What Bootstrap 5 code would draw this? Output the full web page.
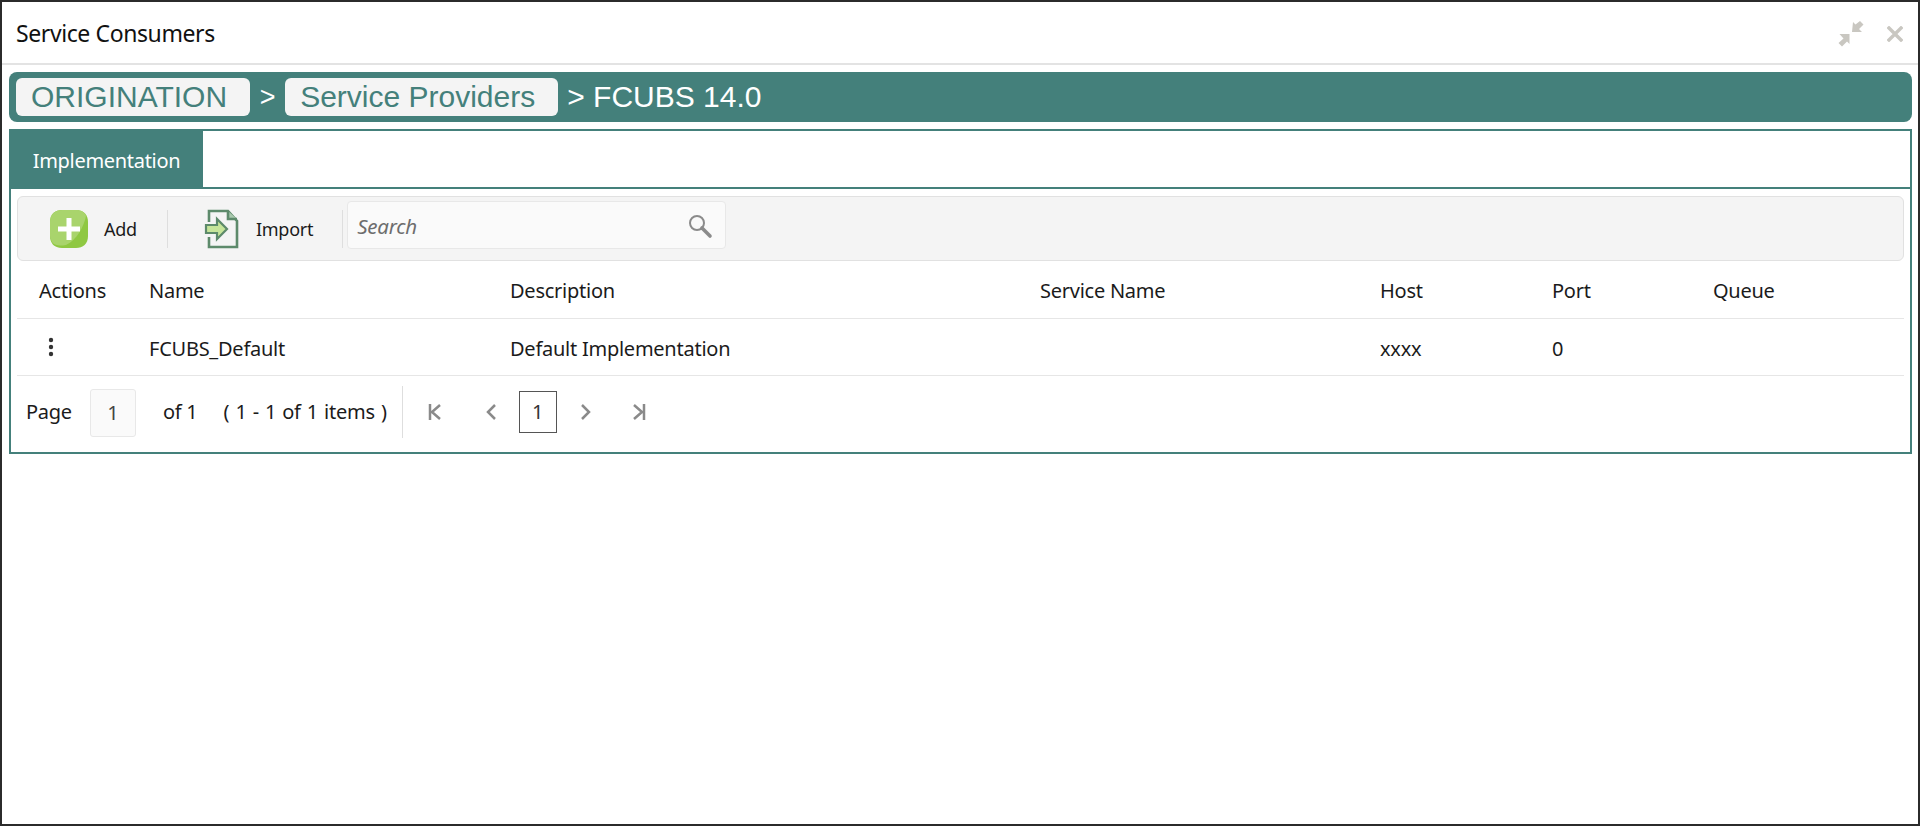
<!DOCTYPE html>
<html lang="en">
<head>
<meta charset="utf-8">
<title>Service Consumers</title>
<link href="https://cdn.jsdelivr.net/npm/bootstrap@5.3.0/dist/css/bootstrap.min.css" rel="stylesheet">
<style>
html,body{height:100%;margin:0;background:#fff}
body{font-family:"Noto Sans","Open Sans",sans-serif;color:#1b1b1b;overflow:hidden}
.win{height:826px;border:2px solid #2b2b2b;background:#fff}
.win-head{height:63px;flex:0 0 auto;border-bottom:2px solid #e3e3e3;padding:2px 14px 0}
.win-title{font-size:23px;letter-spacing:-.4px;color:#111}
.crumbs{margin:7px 6px 0 7px;height:50px;flex:0 0 auto;background:#44807b;border-radius:8px;padding:0 7px;color:#fff;font-family:"Liberation Sans",sans-serif;font-size:30px;line-height:38px}
.crumb-pill{display:block;height:38px;background:#f4f4f4;color:#44807b;border-radius:6px;padding:0 23px 0 15px;text-decoration:none}
.crumb-sep{width:35px;text-align:center;font-size:27px}
.crumb-last{margin-left:9px}
.panel-box{margin:7px 6px 0 7px;height:325px;border:2px solid #44807b}
.tab-strip{height:58px;border-bottom:2px solid #44807b}
.tab-on{width:194px;margin-left:-2px;height:58px;padding:2px 0 0 1px;background:#44807b;color:#fff;font-size:20px;letter-spacing:-.3px}
.tools{margin:7px 6px 0 6px;height:65px;background:#f4f4f4;border:1px solid #e1e1e1;border-radius:6px;padding:0 0 0 32px}
.tool-lbl{font-size:18px;letter-spacing:-.25px;color:#1b1b1b;padding-top:2px}
.tool-sep{width:1px;height:38px;background:#dedede}
.tool-search{width:379px;height:48px;margin:-8px 0 0 4px;background:#fafafa;border:1px solid #e8e8e8;border-radius:4px;padding:3px 12px 0 9px}
.tool-search span{font-size:20.500px;font-style:italic;color:#6d6d6d;letter-spacing:-.25px}
.grid-tbl{table-layout:fixed;width:calc(100% - 12px);margin:0 6px;border-collapse:collapse}
.grid-tbl th,.grid-tbl td{font-weight:400;font-size:20px;letter-spacing:-.25px;color:#1b1b1b;border-bottom:1px solid #e6e6e6;padding:0;vertical-align:middle}
.grid-tbl th{height:57px;padding-top:3px}
.grid-tbl td{height:57px;padding-top:5px}
.grid-tbl .c1{width:132px;padding-left:22px}
.c2{width:361px}.c3{width:530px}.c4{width:340px}.c5{width:172px}.c6{width:161px}
.pager{height:77px;padding:0 0 5px 15px;font-size:20px;letter-spacing:-.25px;color:#1b1b1b}
.page-box{width:46px;height:48px;margin:2px 27px 0 18px;background:#fafafa;border:1px solid #e8e8e8;border-radius:3px;color:#444}
.pager-sep{width:1px;height:52px;background:#dedede;margin:0 0 0 15px}
.page-cur{width:38px;height:42px;border:1px solid #555;color:#333;margin:0 24px 0 23px;font-size:20px}
.pg-icon{display:block}
.rng{margin-left:26px;word-spacing:1.150px}
</style>
</head>
<body>
<div class="win d-flex flex-column">
  <div class="win-head d-flex align-items-center justify-content-between">
    <div class="win-title">Service Consumers</div>
    <div class="d-flex align-items-center" style="gap:23px;margin-right:1px">
      <svg width="26" height="26" viewBox="0 0 26 26" aria-label="Minimize"><g fill="#c9c7c1"><path d="M15 1l2.500 2.500L22 0l3.500 3.500L21 8l3 3H14z"/><path d="M1.500 13h10v10L9 20.500 4 25.500 0.500 22l5-4.500z"/></g></svg>
      <svg width="16" height="16" viewBox="0 0 16 16" aria-label="Close"><path d="M2 2l12 12M14 2L2 14" stroke="#c9c7c1" stroke-width="3.400" stroke-linecap="square"/></svg>
    </div>
  </div>
  <div class="crumbs d-flex align-items-center">
    <a class="crumb-pill" href="#">ORIGINATION</a>
    <span class="crumb-sep">&gt;</span>
    <a class="crumb-pill" href="#">Service Providers</a>
    <span class="crumb-last">&gt; FCUBS 14.0</span>
  </div>
  <div class="panel-box">
    <div class="tab-strip d-flex">
      <div class="tab-on d-flex align-items-center justify-content-center">Implementation</div>
    </div>
    <div class="tools d-flex align-items-center">
      <svg width="38" height="38" viewBox="0 0 38 38" aria-label="Add"><path d="M12 0h14c8 0 12 5 12 12v14c0 8-5 12-12 12H12C4 38 0 33 0 26V12C0 4 5 0 12 0z" fill="#8fc842"/><path d="M12 0h14c5 0 9 2 10 6-2 10-9 24-20 29-6 1-11 1-14-3-1-2-2-4-2-6V12C0 4 5 0 12 0z" fill="#a9d46c"/><path d="M16.500 8h5v8.500H30v5h-8.500V30h-5v-8.500H8v-5h8.500z" fill="#fff"/></svg>
      <span class="tool-lbl ms-3">Add</span>
      <span class="tool-sep" style="margin-left:30px"></span>
      <svg style="margin-left:36px" width="36" height="40" viewBox="0 0 36 40" aria-label="Import"><g fill="none" stroke="#5d8a6b" stroke-width="2.600"><path d="M5 13V2h19l9 10v26H5V28"/><path d="M24 2v8h9" fill="#a9c9ae"/></g><path d="M2 16h11v-6l10 10-10 10v-6H2z" fill="#c6e59a" stroke="#5d8a6b" stroke-width="2.200"/></svg>
      <span class="tool-lbl" style="margin-left:16px">Import</span>
      <span class="tool-sep" style="margin-left:29px"></span>
      <div class="tool-search d-flex align-items-center justify-content-between">
        <span>Search</span>
        <svg width="26" height="26" viewBox="0 0 26 26" aria-label="Search"><circle cx="10" cy="10" r="7" fill="none" stroke="#8b8b8b" stroke-width="2"/><path d="M15 15l8 8" stroke="#8b8b8b" stroke-width="3.600" stroke-linecap="round"/></svg>
      </div>
    </div>
    <table class="grid-tbl">
      <thead><tr><th class="c1">Actions</th><th class="c2">Name</th><th class="c3">Description</th><th class="c4">Service Name</th><th class="c5">Host</th><th class="c6">Port</th><th>Queue</th></tr></thead>
      <tbody><tr><td class="c1"><svg style="margin:-4px 0 0 9px;display:block" width="6" height="20" viewBox="0 0 6 20" aria-label="Actions"><g fill="#333"><circle cx="3" cy="3" r="2.200"/><circle cx="3" cy="10" r="2.200"/><circle cx="3" cy="17" r="2.200"/></g></svg></td><td>FCUBS_Default</td><td>Default Implementation</td><td></td><td>xxxx</td><td>0</td><td></td></tr></tbody>
    </table>
    <div class="pager d-flex align-items-center">
      <span>Page</span>
      <div class="page-box d-flex align-items-center justify-content-center">1</div>
      <span>of 1</span>
      <span class="rng">( 1 - 1 of 1 items )</span>
      <span class="pager-sep"></span>
      <svg class="pg-icon" style="margin-left:25px" width="14" height="18" viewBox="0 0 14 18" aria-label="First"><path d="M2 1v16M12 2L4 9l8 7" fill="none" stroke="#8a8a8a" stroke-width="2.500"/></svg>
      <svg class="pg-icon" style="margin-left:43px" width="11" height="18" viewBox="0 0 11 18" aria-label="Previous"><path d="M10 2L3 9l7 7" fill="none" stroke="#8a8a8a" stroke-width="2.500"/></svg>
      <div class="page-cur d-flex align-items-center justify-content-center">1</div>
      <svg class="pg-icon" width="11" height="18" viewBox="0 0 11 18" aria-label="Next"><path d="M1 2l7 7-7 7" fill="none" stroke="#8a8a8a" stroke-width="2.500"/></svg>
      <svg class="pg-icon" style="margin-left:40px" width="14" height="18" viewBox="0 0 14 18" aria-label="Last"><path d="M12 1v16M2 2l8 7-8 7" fill="none" stroke="#8a8a8a" stroke-width="2.500"/></svg>
    </div>
  </div>
</div>
<script src="https://cdn.jsdelivr.net/npm/bootstrap@5.3.0/dist/js/bootstrap.bundle.min.js"></script>
</body>
</html>
